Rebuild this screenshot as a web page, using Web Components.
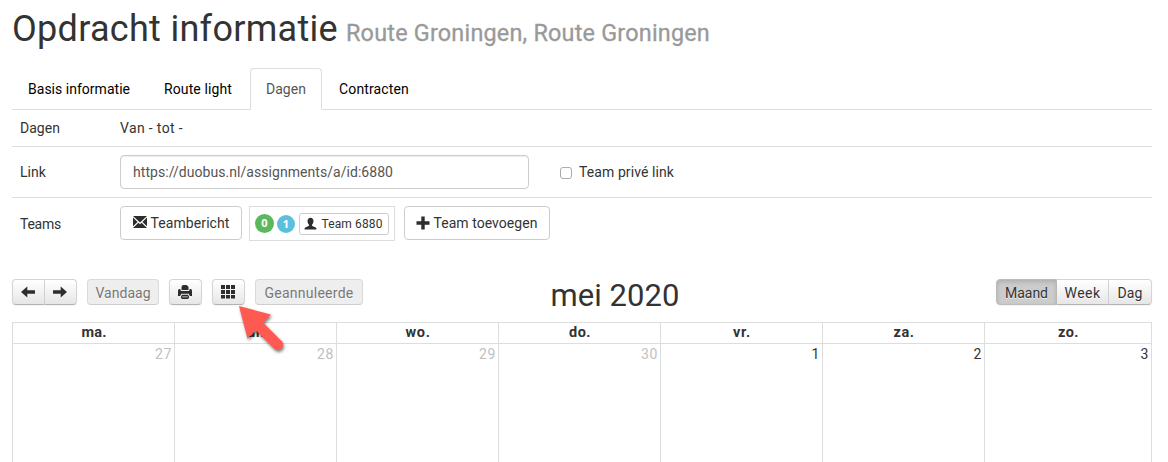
<!DOCTYPE html>
<html lang="nl">
<head>
<meta charset="utf-8">
<title>Opdracht informatie</title>
<style>
    html, body {
        margin: 0;
        height: 462px;
        overflow: hidden;
        background: #fff;
    }
</style>
</head>
<body>
<assignment-page></assignment-page>

<script>
// Text run with a fixed advance width, the tracking is derived from it
class TextRun extends HTMLElement {
    connectedCallback() {
        this.attachShadow({ mode: 'open' }).innerHTML = `
            <style>
                :host { display: inline-block; white-space: nowrap; }
                span { display: inline-block; }
            </style>
            <span><slot></slot></span>
        `;
        const width = parseFloat(this.getAttribute('width'));
        const span = this.shadowRoot.querySelector('span');
        const natural = span.getBoundingClientRect().width;
        span.style.letterSpacing = (width - natural) / this.textContent.length + 'px';
        this.style.width = width + 'px';
    }
}

const ICONS = {
    envelope: '<path d="M0 1h14L7 7.600zM0 2.600 4.600 6.900 0 11.300zM14 2.600v8.700L9.400 6.900zM5.400 7.700 7 9.200 8.600 7.700 14 13H0z"/>',
    user: '<path d="M7 .8c2 0 3.200 1.400 3.200 3.400 0 1.700-.6 3-1.500 3.800v1.300c.5.700 3.600 1.200 4.300 2.200.3.500.4 1.300.4 2H.6c0-.7.1-1.500.4-2 .7-1 3.800-1.500 4.300-2.200V8c-.9-.8-1.500-2.100-1.500-3.800C3.800 2.200 5 .8 7 .8z"/>',
    plus: '<path d="M5.300 .5h3.400v4.800H13.500v3.400H8.700V13.500H5.300V8.700H.5V5.300h4.800z"/>',
    left: '<path d="M0 7 6.300 1.500v3.800H14v3.400H6.300v3.800z"/>',
    right: '<path d="M14 7 7.700 1.500v3.800H0v3.400h7.700v3.800z"/>',
    print: '<path d="M4.800 0h3.700l2 1.800V5h-7V1.800zM.8 4H2.200l.8 2h8l.8-2h1.400l.8 1.500V11h-2.200l-1-2.200H3.200L2.200 11H0V5.500zM4 9.800h6l1 1.700v1.300L10 14H4l-1-1.200v-1.300zM4.200 11.500v.8h5.600v-.8z"/>',
    grid: '<path d="M0 0h4v4H0zM5 0h4v4H5zM10 0h4v4H10zM0 5h4v4H0zM5 5h4v4H5zM10 5h4v4H10zM0 10h4v3.500H0zM5 10h4v3.500H5zM10 10h4v3.500H10z"/>'
};

class GlyphIcon extends HTMLElement {
    connectedCallback() {
        this.attachShadow({ mode: 'open' }).innerHTML = `
            <style>
                :host { display: block; width: 14px; height: 14px; flex: none; }
                svg { display: block; width: 100%; height: 100%; fill: #2d2d2d; }
            </style>
            <svg viewBox="0 0 14 14">${ICONS[this.getAttribute('name')]}</svg>
        `;
    }
}

class NavTab extends HTMLElement {
    connectedCallback() {
        this.attachShadow({ mode: 'open' }).innerHTML = `
            <style>
                :host {
                    display: block;
                    box-sizing: border-box;
                    height: 42px;
                    padding: 10px 15px;
                    border: 1px solid transparent;
                    border-radius: 4px 4px 0 0;
                    margin: 0 2px -1px 0;
                    color: #000;
                }
                :host([active]) {
                    color: #555;
                    background: #fff;
                    border-color: #ddd #ddd #fff;
                }
            </style>
            <slot></slot>
        `;
    }
}

class InfoRow extends HTMLElement {
    connectedCallback() {
        this.attachShadow({ mode: 'open' }).innerHTML = `
            <style>
                :host {
                    display: flex;
                    box-sizing: border-box;
                    padding: 8px;
                }
                :host([ruled]) { border-top: 1px solid #ddd; }
                .label { width: 100px; }
                :host([tall]) .label { padding-top: var(--label-top, 8px); }
                .content { flex: 1; display: flex; }
            </style>
            <div class="label">${this.getAttribute('label')}</div>
            <div class="content"><slot></slot></div>
        `;
    }
}

class BsButton extends HTMLElement {
    connectedCallback() {
        this.attachShadow({ mode: 'open' }).innerHTML = `
            <style>
                :host {
                    display: flex;
                    box-sizing: border-box;
                    align-items: center;
                    height: 34px;
                    padding: 0 12px;
                    gap: 3.500px;
                    background: #fff;
                    border: 1px solid #ccc;
                    border-radius: 4px;
                    color: #333;
                }
                :host([small]) {
                    height: 22px;
                    padding: 0 4px;
                    border-radius: 3px;
                    font-size: 12px;
                }
            </style>
            <slot></slot>
        `;
    }
}

class TeamBox extends HTMLElement {
    connectedCallback() {
        this.attachShadow({ mode: 'open' }).innerHTML = `
            <style>
                :host {
                    display: flex;
                    box-sizing: border-box;
                    align-items: center;
                    width: 146px;
                    height: 35px;
                    margin: 0 9px 0 7px;
                    padding: 0 5px;
                    border: 1px solid #ddd;
                }
                .badge {
                    width: 19px;
                    height: 19px;
                    border-radius: 50%;
                    margin-right: 3px;
                    background: #5cb85c;
                    color: #fff;
                    font: bold 11px/18px "Open Sans", sans-serif;
                    text-align: center;
                }
                .blue { width: 18px; height: 18px; background: #5bc0de; margin-right: 4px; }
                bs-button { width: 90px; }
            </style>
            <span class="badge">0</span>
            <span class="badge blue">1</span>
            <bs-button small><glyph-icon name="user" style="width: 13px; height: 13px; margin-bottom: 1px"></glyph-icon>
                <text-run width="61" style="margin-left: 1px">Team 6880</text-run></bs-button>
        `;
    }
}

class CalButton extends HTMLElement {
    connectedCallback() {
        this.attachShadow({ mode: 'open' }).innerHTML = `
            <style>
                :host {
                    display: flex;
                    box-sizing: border-box;
                    align-items: center;
                    justify-content: center;
                    height: 26px;
                    border: 1px solid #d4d4d4;
                    border-bottom-color: #b3b3b3;
                    border-radius: 4px;
                    background: linear-gradient(#fff, #e6e6e6);
                    box-shadow: inset 0 1px 0 rgba(255, 255, 255, .2), 0 1px 2px rgba(0, 0, 0, .05);
                    color: #333;
                    text-shadow: 0 1px 1px rgba(255, 255, 255, .75);
                }
                :host([first]) { border-radius: 4px 0 0 4px; }
                :host([middle]) { border-radius: 0; border-left: 0; }
                :host([last]) { border-radius: 0 4px 4px 0; border-left: 0; }
                :host([disabled]) {
                    background: #eee;
                    border-color: #dadada #dadada #cdcdcd;
                    box-shadow: none;
                    color: #777;
                }
                :host([active]) {
                    background: #ccc;
                    border-color: #bbb;
                    box-shadow: inset 0 2px 4px rgba(0, 0, 0, .15), 0 1px 2px rgba(0, 0, 0, .05);
                }
                ::slotted(text-run) { margin-top: 2px; }
                ::slotted(glyph-icon) { margin-right: 1px; }
            </style>
            <slot></slot>
        `;
    }
}

class CalendarGrid extends HTMLElement {
    connectedCallback() {
        const days = [
            ['ma.', 27, 24], ['di.', 28, 17], ['wo.', 29, 24], ['do.', 30, 21],
            ['vr.', 1, 17], ['za.', 2, 20], ['zo.', 3, 20]
        ];
        this.attachShadow({ mode: 'open' }).innerHTML = `
            <style>
                :host {
                    display: grid;
                    grid-template-columns: repeat(6, 162px) 1fr;
                    grid-template-rows: 21px 130px;
                    border-top: 1px solid #ddd;
                    border-left: 1px solid #ddd;
                }
                div {
                    box-sizing: border-box;
                    border-right: 1px solid #ddd;
                }
                .head {
                    padding-left: 1px;
                    border-bottom: 1px solid #ddd;
                    font-size: 14.500px;
                    font-weight: 700;
                    line-height: 20px;
                    text-align: center;
                }
                .day {
                    padding: 0 2px;
                    line-height: 20px;
                    text-align: right;
                }
                .other { color: #bfbfbf; }
            </style>
            ${days.map(d => `<div class="head"><text-run width="${d[2] + 1}">${d[0]}</text-run></div>`).join('')}
            ${days.map(d => `<div class="day ${d[1] > 20 ? 'other' : ''}"><text-run width="${d[1] > 20 ? 17 : 8.4}">${d[1]}</text-run></div>`).join('')}
        `;
    }
}

class AssignmentPage extends HTMLElement {
    connectedCallback() {
        this.attachShadow({ mode: 'open' }).innerHTML = `
            <style>
                :host {
                    display: block;
                    box-sizing: border-box;
                    position: relative;
                    width: 1168px;
                    height: 462px;
                    overflow: hidden;
                    padding: 9px 16px 0 12px;
                    font: 14px/20px Roboto, sans-serif;
                    color: #333;
                }
                h1, h2 { margin: 0; font-weight: 400; }
                h1 { height: 59px; font-size: 36px; line-height: 40px; }
                small { font-size: 23.4px; font-weight: 400; line-height: 1; color: #999; margin-left: 8px; -webkit-text-stroke: .3px #999; }
                nav { display: flex; height: 41px; border-bottom: 1px solid #ddd; }
                .url {
                    box-sizing: border-box;
                    width: 409px;
                    height: 34px;
                    padding: 6px 12px;
                    border: 1px solid #ccc;
                    border-radius: 4px;
                    box-shadow: inset 0 1px 1px rgba(0, 0, 0, .075);
                    color: #555;
                }
                .check { display: flex; align-items: center; margin-left: 31px; gap: 7px; height: 34px; }
                .box {
                    box-sizing: border-box;
                    width: 12px;
                    height: 12px;
                    border: 1px solid #aaa;
                    border-radius: 3px;
                    margin-top: 2px;
                }
                .toolbar { display: grid; grid-template-columns: 1fr auto 1fr; align-items: start; margin-top: 30px; height: 43px; }
                .side { display: flex; gap: 10px; }
                .right { justify-content: flex-end; }
                .group { display: flex; }
                h2 { font-size: 31px; line-height: 32px; margin: 1px 0 0 66px; }
                .pointer { position: absolute; left: 234px; top: 300px; }
            </style>
            <h1><text-run width="326">Opdracht informatie</text-run><small><text-run width="364">Route Groningen, Route Groningen</text-run></small></h1>
            <nav>
                <nav-tab><text-run width="102">Basis informatie</text-run></nav-tab>
                <nav-tab><text-run width="68">Route light</text-run></nav-tab>
                <nav-tab active><text-run width="40">Dagen</text-run></nav-tab>
                <nav-tab style="padding-left: 14px"><text-run width="70">Contracten</text-run></nav-tab>
            </nav>
            <info-row label="<text-run width='40'>Dagen</text-run>" style="height: 36px"><text-run width="63">Van - tot -</text-run></info-row>
            <info-row ruled tall label="<text-run width='26'>Link</text-run>" style="height: 51px; --label-top: 7px">
                <div class="url"><text-run width="260">https://duobus.nl/assignments/a/id:6880</text-run></div>
                <div class="check"><span class="box"></span><text-run width="95">Team privé link</text-run></div>
            </info-row>
            <info-row ruled tall label="<text-run width='41'>Teams</text-run>" style="height: 52px">
                <bs-button style="width: 122px"><glyph-icon name="envelope" style="margin-bottom: 2px"></glyph-icon><text-run width="79">Teambericht</text-run></bs-button>
                <team-box></team-box>
                <bs-button style="width: 146px; padding-left: 11px"><glyph-icon name="plus"></glyph-icon><text-run width="104">Team toevoegen</text-run></bs-button>
            </info-row>
            <div class="toolbar">
                <div class="side">
                    <div class="group">
                        <cal-button first style="width: 33px"><glyph-icon name="left"></glyph-icon></cal-button>
                        <cal-button last style="width: 32px"><glyph-icon name="right"></glyph-icon></cal-button>
                    </div>
                    <cal-button disabled style="width: 72px"><text-run width="55">Vandaag</text-run></cal-button>
                    <cal-button style="width: 33px"><glyph-icon name="print"></glyph-icon></cal-button>
                    <cal-button style="width: 33px"><glyph-icon name="grid"></glyph-icon></cal-button>
                    <cal-button disabled style="width: 108px"><text-run width="89">Geannuleerde</text-run></cal-button>
                </div>
                <h2><text-run width="129">mei 2020</text-run></h2>
                <div class="side right">
                    <div class="group">
                        <cal-button first active style="width: 61px"><text-run width="43">Maand</text-run></cal-button>
                        <cal-button middle style="width: 52px"><text-run width="36">Week</text-run></cal-button>
                        <cal-button last style="width: 43px"><text-run width="25">Dag</text-run></cal-button>
                    </div>
                </div>
            </div>
            <calendar-grid></calendar-grid>
            <svg class="pointer" width="58" height="60" viewBox="0 0 58 60">
                <path d="M5 6 37 14.500 29 22.500 48 41.500Q50.500 45 47.500 48.500 44 51.500 40.500 49L22 30.500 13.500 38.500Z"
                    fill="#ff5a52" style="filter: drop-shadow(1px 2px 1.5px rgba(0, 0, 0, .5))"/>
            </svg>
        `;
    }
}

customElements.define('text-run', TextRun);
customElements.define('glyph-icon', GlyphIcon);
customElements.define('nav-tab', NavTab);
customElements.define('info-row', InfoRow);
customElements.define('bs-button', BsButton);
customElements.define('team-box', TeamBox);
customElements.define('cal-button', CalButton);
customElements.define('calendar-grid', CalendarGrid);
customElements.define('assignment-page', AssignmentPage);
</script>
</body>
</html>
